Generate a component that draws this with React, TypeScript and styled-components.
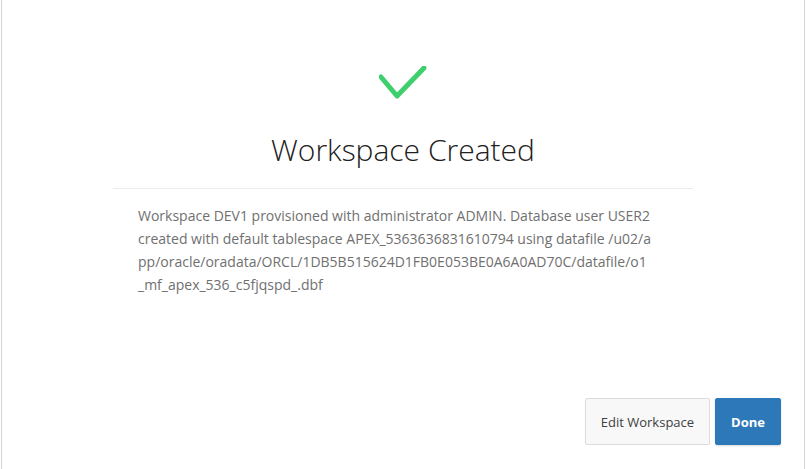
import React from "react";
import styled, { createGlobalStyle } from "styled-components";

const Global = createGlobalStyle`
  html, body { margin: 0; padding: 0; background: #fff; }
  body { font-family: "Open Sans", "Noto Sans", sans-serif; }
`;

const Page = styled.div`
  box-sizing: border-box;
  width: 806px;
  height: 469px;
  padding: 0 1px;
  overflow: hidden;
`;

const Dialog = styled.div`
  box-sizing: border-box;
  height: 100%;
  border-left: 1px solid #d6d6d6;
  border-right: 1px solid #d6d6d6;
  background: #fff;
  display: flex;
  flex-direction: column;
`;

const Header = styled.div`
  display: flex;
  flex-direction: column;
  align-items: center;
  padding-top: 66px;
`;

const Check = styled.svg`
  width: 48px;
  height: 36px;
  display: block;
`;

const Title = styled.h1`
  margin: 28px 0 0;
  font-family: "Open Sans", sans-serif;
  font-weight: 300;
  font-size: 30px;
  line-height: 40px;
  color: #202020;
`;

const Divider = styled.hr`
  width: 580px;
  margin: 18px auto 0;
  border: 0;
  border-top: 1px solid #ececec;
`;

const Body = styled.div`
  padding: 15px 0 0 136px;
  font-size: 14px;
  line-height: 23px;
  color: #707070;
`;

const Line = styled.div`
  white-space: nowrap;
`;

const Footer = styled.div`
  margin-top: auto;
  display: flex;
  justify-content: flex-end;
  gap: 5px;
  padding: 0 23px 24px 0;
`;

const Button = styled.button<{ $primary?: boolean }>`
  box-sizing: border-box;
  height: 47px;
  padding: 0 ${(p) => (p.$primary ? "15px" : "15px")};
  border-radius: 2px;
  font-family: "Open Sans", sans-serif;
  font-size: 13px;
  font-weight: ${(p) => (p.$primary ? 700 : 400)};
  color: ${(p) => (p.$primary ? "#fff" : "#404040")};
  background: ${(p) => (p.$primary ? "#2d78b9" : "#f8f8f8")};
  border: 1px solid ${(p) => (p.$primary ? "#2d78b9" : "#dcdcdc")};
  box-shadow: ${(p) => (p.$primary ? "0 1px 2px rgba(0,0,0,0.15)" : "none")};
`;

export default function App() {
  return (
    <>
      <Global />
      <Page>
        <Dialog>
          <Header>
            <Check viewBox="0 0 48 36">
              <path d="M2 11 L18 30 L45 2" fill="none" stroke="#3fcf6d" strokeWidth="5" strokeLinecap="round" strokeLinejoin="round" />
            </Check>
            <Title>Workspace Created</Title>
          </Header>
          <Divider />
          <Body>
            <Line>Workspace DEV1 provisioned with administrator ADMIN. Database user USER2</Line>
            <Line>created with default tablespace APEX_5363636831610794 using datafile /u02/a</Line>
            <Line>pp/oracle/oradata/ORCL/1DB5B515624D1FB0E053BE0A6A0AD70C/datafile/o1</Line>
            <Line>_mf_apex_536_c5fjqspd_.dbf</Line>
          </Body>
          <Footer>
            <Button>Edit Workspace</Button>
            <Button $primary>Done</Button>
          </Footer>
        </Dialog>
      </Page>
    </>
  );
}
